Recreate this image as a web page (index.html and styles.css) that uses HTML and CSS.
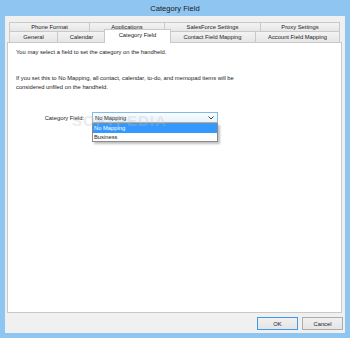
FILE: index.html
```html
<!DOCTYPE html>
<html lang="en">
<head>
    <meta charset="UTF-8">
    <title>Category Field</title>
    <link rel="stylesheet" href="styles.css">
</head>
<body>
    <div class="window">
        <div class="titlebar">Category Field</div>
        <div class="client">
            <div class="tabs">
                <div class="tabrow back">
                    <div class="tab">Phone Format</div>
                    <div class="tab">Applications</div>
                    <div class="tab">SalesForce Settings</div>
                    <div class="tab">Proxy Settings</div>
                </div>
                <div class="tabrow front">
                    <div class="tab">General</div>
                    <div class="tab">Calendar</div>
                    <div class="tab active">Category Field</div>
                    <div class="tab">Contact Field Mapping</div>
                    <div class="tab">Account Field Mapping</div>
                </div>
            </div>
            <div class="panel">
                <p class="intro">You may select a field to set the category on the handheld.</p>
                <p class="note">If you set this to No Mapping, all contact, calendar, to-do, and memopad items will be<br>considered unfiled on the handheld.</p>
                <div class="field">
                    <label>Category Field:</label>
                    <div class="combo">
                        <div class="combo-box">
                            <span>No Mapping</span>
                            <svg class="chev" width="6" height="4" viewBox="0 0 6 4"><path d="M0.5 0.5 L3 3 L5.5 0.5" fill="none" stroke="#404040" stroke-width="1"/></svg>
                        </div>
                        <div class="combo-list">
                            <div class="item selected">No Mapping</div>
                            <div class="item">Business</div>
                        </div>
                    </div>
                </div>
                <div class="watermark">SOFTPEDIA</div>
            </div>
            <div class="buttons">
                <button class="default">OK</button>
                <button>Cancel</button>
            </div>
        </div>
    </div>
</body>
</html>
```

FILE: styles.css
```css
/* Windows 8 style dialog */
html, body {
    margin: 0;
    padding: 0;
}
body {
    width: 350px;
    height: 338px;
    overflow: hidden;
    font-family: "Liberation Sans", Arial, sans-serif;
    font-size: 5.8px;
    color: #1a1a1a;
}
.window {
    width: 350px;
    height: 338px;
    box-sizing: border-box;
    background-color: #8ec5f1;
    padding: 0 5px 5px 5px;
    display: flex;
    flex-direction: column;
}
.titlebar {
    height: 16px;
    line-height: 17px;
    text-align: center;
    font-size: 7.6px;
    color: #202020;
}
.client {
    flex: 1;
    background-color: #f0f0f0;
    display: flex;
    flex-direction: column;
    padding: 6px 3px 0 2px;
}
.tabs {
    padding: 0 1px 0 2px;
    position: relative;
    z-index: 1;
}
.tabrow {
    display: grid;
    height: 10px;
}
.tabrow.back {
    grid-template-columns: 80px 75px 96px 80px;
    height: 9px;
}
.tabrow.front {
    grid-template-columns: 48px 48px 65px 85px 85px;
    height: 11px;
}
.tab {
    background: linear-gradient(#f3f3f3, #e6e6e6);
    border: 1px solid #c9c9c9;
    border-right: none;
    border-bottom: none;
    text-align: center;
    line-height: 9px;
    white-space: nowrap;
    overflow: hidden;
}
.tab:last-child {
    border-right: 1px solid #c9c9c9;
}
.front .tab {
    line-height: 10px;
}
.front .tab.active {
    background: #ffffff;
    margin: -2px -1px -1px -1px;
    border-right: 1px solid #c9c9c9;
    position: relative;
    line-height: 11px;
}
.front .tab.active + .tab {
    border-left: none;
}
.panel {
    position: relative;
    height: 264px;
    background-color: #ffffff;
    border: 1px solid #c9c9c9;
    padding: 5px 8px 0 8px;
}
.panel p {
    margin: 0;
    line-height: 9px;
}
.note {
    margin-top: 17px !important;
}
.field {
    display: flex;
    align-items: center;
    margin-top: 20px;
}
.field label {
    width: 76px;
    text-align: right;
    padding-right: 8px;
    box-sizing: border-box;
}
.combo {
    position: relative;
    width: 126px;
}
.combo-box {
    height: 9px;
    border: 1px solid #86b8e6;
    background: linear-gradient(#fafdff, #e8f3fc);
    display: flex;
    align-items: center;
    justify-content: space-between;
    padding: 0 3px 0 2px;
}
.chev {
    display: block;
}
.combo-list {
    position: absolute;
    top: 100%;
    left: 0;
    right: 0;
    background-color: #ffffff;
    border: 1px solid #8a8a8a;
    box-shadow: 2px 2px 2px rgba(0, 0, 0, 0.25);
    z-index: 2;
}
.item {
    height: 8.5px;
    line-height: 8.5px;
    padding-left: 1px;
}
.item.selected {
    background-color: #3399ff;
    color: #ffffff;
}
.watermark {
    position: absolute;
    left: 64px;
    top: 69px;
    font-size: 15px;
    font-weight: bold;
    letter-spacing: 1px;
    color: rgba(190, 190, 190, 0.3);
    z-index: 3;
    pointer-events: none;
}
.buttons {
    display: flex;
    justify-content: flex-end;
    gap: 4px;
    padding: 4px 0 0 0;
    margin-right: -1px;
}
button {
    width: 41px;
    height: 13px;
    padding: 0;
    font-family: "Liberation Sans", Arial, sans-serif;
    font-size: 5.8px;
    color: #1a1a1a;
    background: linear-gradient(#f0f0f0, #e5e5e5);
    border: 1px solid #acacac;
}
button.default {
    border-color: #3c9ae6;
}
```
